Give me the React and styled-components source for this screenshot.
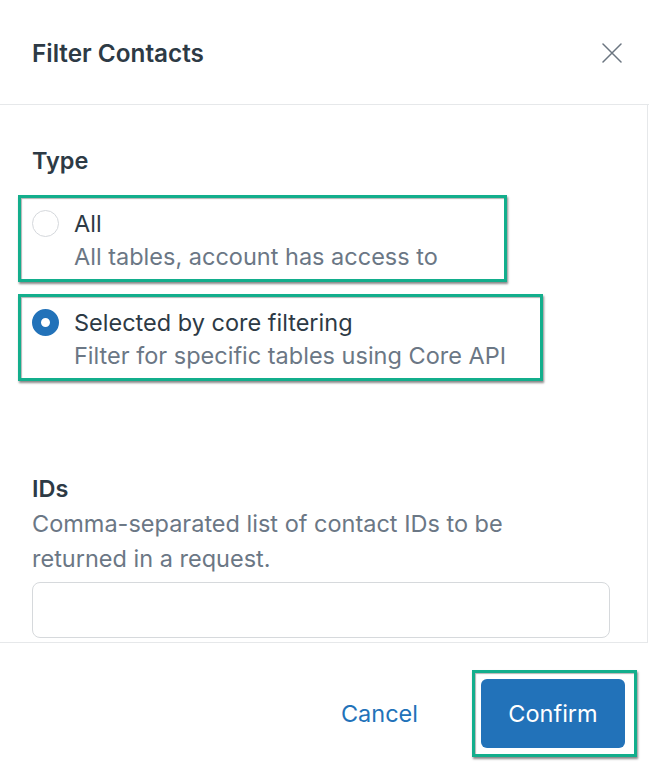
import React, { useState } from "react";
import styled, { createGlobalStyle } from "styled-components";

const GlobalStyle = createGlobalStyle`
  html, body {
    margin: 0;
    padding: 0;
    background: #ffffff;
  }
  body {
    font-family: Inter, "Liberation Sans", Arial, sans-serif;
    color: #2d3a45;
  }
`;

const options = [
  {
    id: "all",
    label: "All",
    description: "All tables, account has access to",
    boxWidth: 489
  },
  {
    id: "core",
    label: "Selected by core filtering",
    description: "Filter for specific tables using Core API",
    boxWidth: 525
  }
];

const App = () => {
  const [type, setType] = useState("core");

  return (
    <SModal>
      <GlobalStyle />
      <SHeader>
        <STitle>Filter Contacts</STitle>
        <SClose aria-label="Close">
          <svg width="20" height="20" viewBox="0 0 20 20" fill="none">
            <path
              d="M1 1L19 19M19 1L1 19"
              stroke="#6b7580"
              strokeWidth="1.5"
              strokeLinecap="round"
            />
          </svg>
        </SClose>
      </SHeader>

      <SBody>
        <SSectionTitle>Type</SSectionTitle>
        <SOptions>
          {options.map(option => (
            <SHighlight key={option.id} boxWidth={option.boxWidth}>
              <SOption onClick={() => setType(option.id)}>
                <SRadio checked={type === option.id} />
                <SOptionText>
                  <SOptionLabel>{option.label}</SOptionLabel>
                  <SOptionHint>{option.description}</SOptionHint>
                </SOptionText>
              </SOption>
            </SHighlight>
          ))}
        </SOptions>

        <SField>
          <SSectionTitle>IDs</SSectionTitle>
          <SFieldHint>
            Comma-separated list of contact IDs to be
            <br />
            returned in a request.
          </SFieldHint>
          <SInput type="text" />
        </SField>
      </SBody>

      <SFooter>
        <SCancel>Cancel</SCancel>
        <SHighlight boxWidth={165}>
          <SConfirm>Confirm</SConfirm>
        </SHighlight>
      </SFooter>
    </SModal>
  );
};

const SModal = styled.div`
  display: flex;
  flex-direction: column;
  width: 649px;
  height: 783px;
  background: #ffffff;
  overflow: hidden;
`;

const SHeader = styled.div`
  display: flex;
  align-items: center;
  justify-content: space-between;
  height: 105px;
  padding: 2px 27px 0 32px;
  border-bottom: 1px solid #e6e8ea;
  box-sizing: border-box;
  flex-shrink: 0;
`;

const STitle = styled.h2`
  margin: 0;
  font-size: 24.3px;
  font-weight: 600;
  color: #2d3a45;
`;

const SClose = styled.button`
  display: flex;
  align-items: center;
  justify-content: center;
  width: 20px;
  height: 20px;
  padding: 0;
  border: none;
  background: transparent;
  cursor: pointer;
`;

const SBody = styled.div`
  height: 538px;
  width: 648px;
  padding: 41px 32px 0 32px;
  box-sizing: border-box;
  border-right: 1px solid #e6e8ea;
  border-bottom: 1px solid #e6e8ea;
  overflow: hidden;
  flex-shrink: 0;
`;

const SSectionTitle = styled.h3`
  margin: 0;
  font-size: 23.5px;
  font-weight: 600;
  line-height: 30px;
  color: #2d3a45;
`;

const SOptions = styled.div`
  display: flex;
  flex-direction: column;
  gap: 12px;
  margin: 19px 0 0 -14px;
`;

const SHighlight = styled.div`
  width: ${({ boxWidth }) => `${boxWidth}px`};
  border: 3px solid #13ae8c;
  box-sizing: border-box;
  box-shadow: 1px 2px 2px rgba(40, 40, 40, 0.55),
    inset 1px 1px 1px rgba(40, 40, 40, 0.35);
`;

const SOption = styled.label`
  display: flex;
  align-items: flex-start;
  gap: 15px;
  padding: 11px 0 3px 11px;
  cursor: pointer;
`;

const SRadio = styled.span`
  display: block;
  width: 27px;
  height: 27px;
  margin-top: 1px;
  border-radius: 50%;
  box-sizing: border-box;
  flex-shrink: 0;
  border: ${({ checked }) =>
    checked ? "9.5px solid #2272b9" : "1px solid #d5d8dc"};
  background: #ffffff;
`;

const SOptionText = styled.div`
  display: flex;
  flex-direction: column;
`;

const SOptionLabel = styled.span`
  font-size: 23.5px;
  line-height: 29px;
  color: #2d3a45;
`;

const SOptionHint = styled.span`
  font-size: 23.5px;
  line-height: 38px;
  color: #6b7785;
`;

const SField = styled.div`
  margin-top: 93px;
`;

const SFieldHint = styled.p`
  margin: 2px 0 6px;
  font-size: 23.5px;
  line-height: 35px;
  color: #6b7785;
`;

const SInput = styled.input`
  display: block;
  width: 578px;
  height: 56px;
  box-sizing: border-box;
  border: 1px solid #d6d9dc;
  border-radius: 8px;
  padding: 0 14px;
  font-family: inherit;
  font-size: 22px;
  outline: none;
`;

const SFooter = styled.div`
  display: flex;
  align-items: center;
  justify-content: flex-end;
  gap: 54px;
  flex: 1;
  padding: 0 12px 0 0;
`;

const SCancel = styled.button`
  border: none;
  background: transparent;
  padding: 0;
  font-family: inherit;
  font-size: 23.5px;
  color: #2272b9;
  cursor: pointer;
`;

const SConfirm = styled.button`
  display: block;
  width: 144px;
  height: 69px;
  margin: 6px 9px 6px 6px;
  border: none;
  border-radius: 6px;
  background: #2272b9;
  color: #ffffff;
  font-family: inherit;
  font-size: 23.5px;
  cursor: pointer;
`;

export default App;
